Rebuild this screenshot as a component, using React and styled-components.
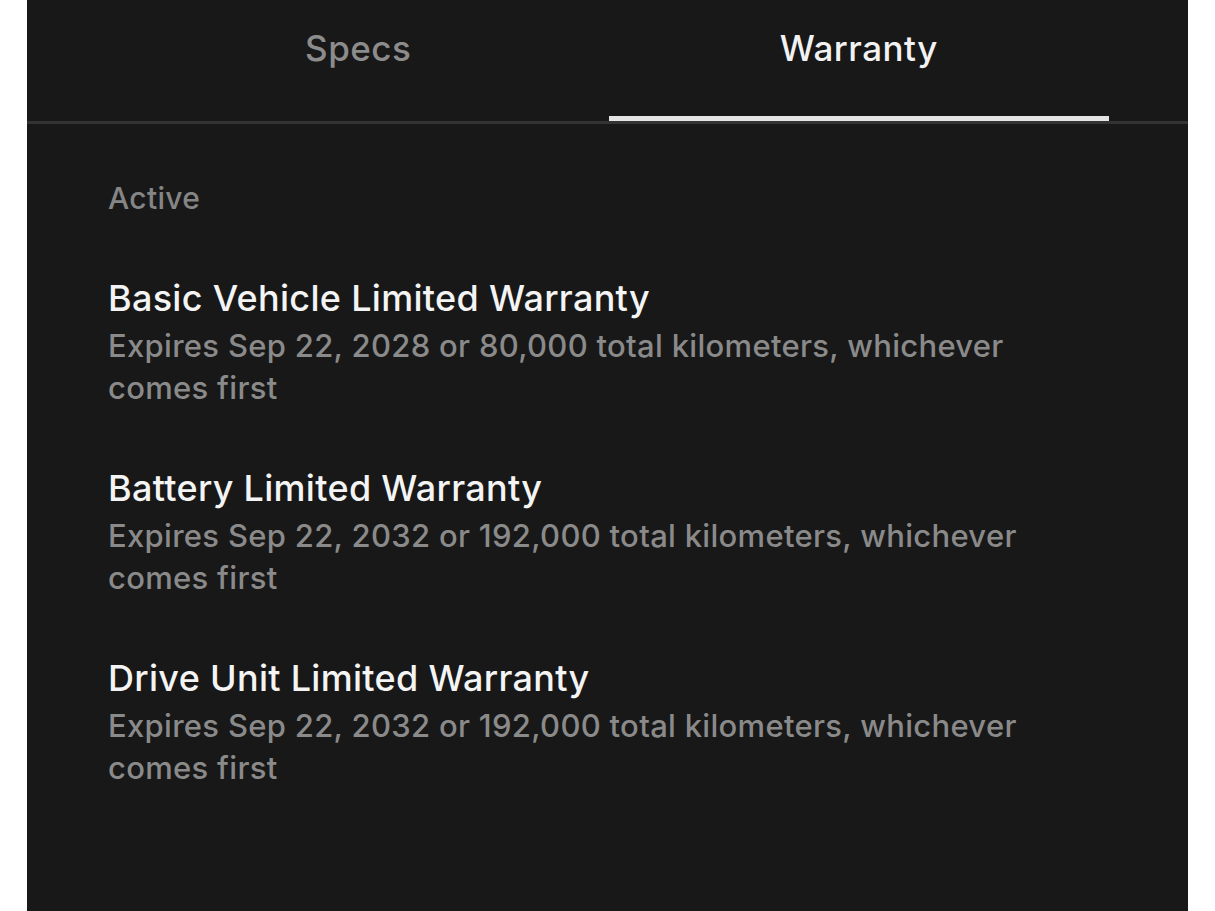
import styled, { createGlobalStyle } from 'styled-components'

const GlobalStyle = createGlobalStyle`
    body {
        margin: 0;
        background: #ffffff;
        font-family: Inter, "Liberation Sans", sans-serif;
    }
`;

const warranties = [
    {
        title: 'Basic Vehicle Limited Warranty',
        detail: 'Expires Sep 22, 2028 or 80,000 total kilometers, whichever comes first',
    },
    {
        title: 'Battery Limited Warranty',
        detail: 'Expires Sep 22, 2032 or 192,000 total kilometers, whichever comes first',
    },
    {
        title: 'Drive Unit Limited Warranty',
        detail: 'Expires Sep 22, 2032 or 192,000 total kilometers, whichever comes first',
    },
];

const App = () => (
    <Page>
        <GlobalStyle />
        <Panel>
            <TabBar>
                <Tab>Specs</Tab>
                <Tab active>Warranty</Tab>
            </TabBar>
            <Content>
                <Section>Active</Section>
                {warranties.map((w) => (
                    <Item key={w.title}>
                        <Title>{w.title}</Title>
                        <Detail>{w.detail}</Detail>
                    </Item>
                ))}
            </Content>
        </Panel>
    </Page>
);

const Page = styled.div`
    padding: 0 27px;
`;

const Panel = styled.div`
    background: #181818;
    min-height: 911px;
`;

const TabBar = styled.div`
    display: flex;
    padding: 0 79px 0 81px;
    border-bottom: 3px solid #333333;
`;

const Tab = styled.div`
    flex: 1;
    height: 121px;
    box-sizing: border-box;
    padding-top: 27px;
    text-align: center;
    font-size: 35px;
    line-height: 42px;
    font-weight: 500;
    letter-spacing: 0.5px;
    color: ${(p) => (p.active ? '#f2f2f2' : '#8c8c8c')};
    border-bottom: 5px solid ${(p) => (p.active ? '#e4e4e4' : 'transparent')};
`;

const Content = styled.div`
    padding: 56px 80px 0 81px;
    display: flex;
    flex-direction: column;
`;

const Section = styled.div`
    font-size: 30px;
    line-height: 36px;
    font-weight: 500;
    color: #858585;
    letter-spacing: 0.3px;
    margin-bottom: 60px;
`;

const Item = styled.div`
    margin-bottom: 57px;
`;

const Title = styled.div`
    font-size: 36px;
    line-height: 44px;
    font-weight: 500;
    color: #f4f4f4;
    letter-spacing: 0.3px;
    margin-bottom: 5px;
`;

const Detail = styled.div`
    font-size: 31px;
    line-height: 42px;
    font-weight: 500;
    color: #8a8a8a;
    letter-spacing: 0.3px;
    max-width: 940px;
`;

export default App
